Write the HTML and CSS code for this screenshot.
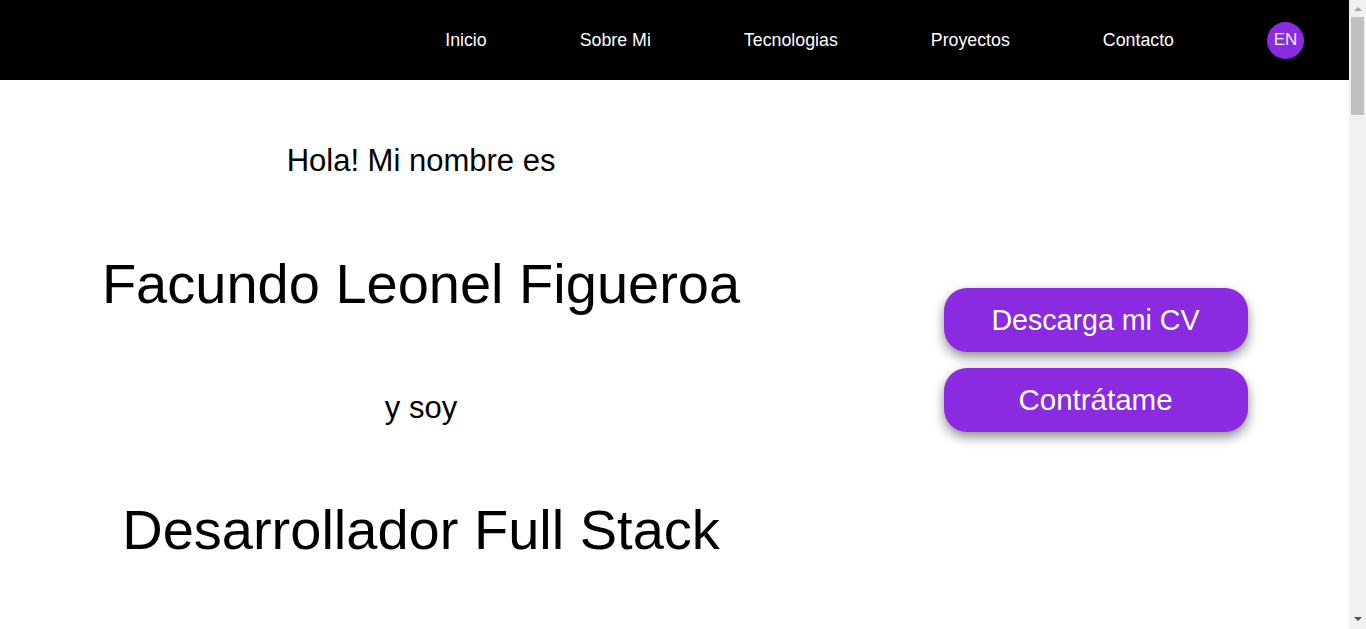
FILE: index.html
```html
<!DOCTYPE html>
<html lang="es">
<head>
<meta charset="utf-8">
<title>Facundo Leonel Figueroa</title>
<link rel="stylesheet" href="styles.css">
</head>
<body>
<header class="topbar">
  <nav class="nav">
    <a class="nav-link" href="#inicio">Inicio</a>
    <a class="nav-link" href="#sobre">Sobre Mi</a>
    <a class="nav-link" href="#tecnologias">Tecnologias</a>
    <a class="nav-link" href="#proyectos">Proyectos</a>
    <a class="nav-link" href="#contacto">Contacto</a>
    <button class="lang">EN</button>
  </nav>
</header>
<main class="hero" id="inicio">
  <section class="intro">
    <p class="line small">Hola! Mi nombre es</p>
    <h1 class="line big">Facundo Leonel Figueroa</h1>
    <p class="line small soy">y soy</p>
    <h2 class="line big">Desarrollador Full Stack</h2>
  </section>
  <aside class="actions">
    <a class="btn btn-cv" href="#">Descarga mi CV</a>
    <a class="btn btn-hire" href="#contacto">Contrátame</a>
  </aside>
</main>
<div class="scrollbar" aria-hidden="true">
  <span class="sb-arrow sb-up"></span>
  <span class="sb-thumb"></span>
  <span class="sb-arrow sb-down"></span>
</div>
</body>
</html>
```
FILE: styles.css
```css
* { box-sizing: border-box; }
html, body { margin: 0; padding: 0; }
body {
  font-family: "Liberation Sans", Arial, sans-serif;
  color: #000;
  background: #fff;
  padding-right: 17px;
  min-height: 629px;
  overflow: hidden;
}
.topbar {
  height: 80px;
  background: #000;
  display: flex;
  align-items: center;
  justify-content: flex-end;
  padding-right: 45px;
}
.nav {
  display: flex;
  align-items: center;
  gap: 93px;
}
.nav-link {
  color: #fff;
  text-decoration: none;
  font-size: 17.8px;
  line-height: 20px;
}
.lang {
  width: 37px;
  height: 37px;
  border-radius: 50%;
  border: none;
  background: #8a2be2;
  color: #f4eefc;
  font-family: "Liberation Sans", Arial, sans-serif;
  font-size: 17px;
  padding: 0;
  display: flex;
  align-items: center;
  justify-content: center;
}
.hero {
  display: grid;
  grid-template-columns: 62.42% 1fr;
  padding-top: 19px;
}
.intro {
  display: flex;
  flex-direction: column;
  align-items: center;
}
.line {
  margin: 0;
  height: 123px;
  display: flex;
  align-items: center;
  justify-content: center;
  font-weight: normal;
  white-space: nowrap;
}
.small { font-size: 31px; }
.soy { padding-top: 3px; }
.big { font-size: 56px; }
.actions {
  display: flex;
  flex-direction: column;
  align-items: center;
  gap: 16px;
  padding-top: 189px;
}
.btn {
  width: 304px;
  height: 64px;
  border-radius: 23px;
  background: #8a2be2;
  color: #fff;
  text-decoration: none;
  display: flex;
  align-items: center;
  justify-content: center;
  box-shadow: 0 5px 12px rgba(0, 0, 0, 0.45);
}
.btn-cv { font-size: 28.6px; }
.btn-hire { font-size: 29.5px; }

/* browser scrollbar look-alike, overlaying the right edge */
.scrollbar {
  position: fixed;
  top: 0;
  right: 0;
  bottom: 0;
  width: 17px;
  background: #f1f1f1;
  display: flex;
  flex-direction: column;
  align-items: center;
}
.sb-arrow {
  width: 0;
  height: 0;
  border-left: 4px solid transparent;
  border-right: 4px solid transparent;
}
.sb-up {
  margin-top: 7px;
  border-bottom: 4px solid #a3a3a3;
}
.sb-thumb {
  margin-top: 6px;
  width: 13px;
  height: 98px;
  background: #c1c1c1;
}
.sb-down {
  margin-top: auto;
  margin-bottom: 8px;
  border-top: 4px solid #505050;
}
```
